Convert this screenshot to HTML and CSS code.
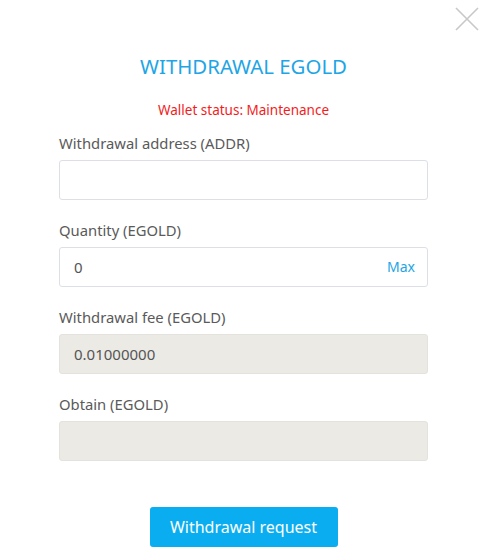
FILE: index.html
```html
<!DOCTYPE html>
<html lang="en">
<head>
    <meta charset="UTF-8">
    <title>Withdrawal EGOLD</title>
    <link rel="stylesheet" href="styles.css">
</head>
<body>
    <div class="modal">
        <button class="close-btn" aria-label="Close">
            <svg width="24" height="24" viewBox="0 0 24 24">
                <path d="M1 1 L23 23 M23 1 L1 23" stroke="#c8c8c8" stroke-width="1.6" fill="none"/>
            </svg>
        </button>

        <h2 class="modal-title">WITHDRAWAL EGOLD</h2>
        <p class="wallet-status">Wallet status: Maintenance</p>

        <form class="withdraw-form">
            <div class="field">
                <label>Withdrawal address (ADDR)</label>
                <input type="text" class="input">
            </div>
            <div class="field">
                <label>Quantity (EGOLD)</label>
                <div class="input input-with-max">
                    <span class="value">0</span>
                    <span class="max-link">Max</span>
                </div>
            </div>
            <div class="field">
                <label>Withdrawal fee (EGOLD)</label>
                <div class="input input-disabled">0.01000000</div>
            </div>
            <div class="field">
                <label>Obtain (EGOLD)</label>
                <div class="input input-disabled"></div>
            </div>
            <div class="actions">
                <button type="button" class="submit-btn">Withdrawal request</button>
            </div>
        </form>
    </div>
</body>
</html>
```

FILE: styles.css
```css
/* base */
body {
    margin: 0;
    padding: 0;
    background: #fff;
    font-family: "Noto Sans", "Open Sans", sans-serif;
    color: #555;
}

.modal {
    position: relative;
    width: 486px;
    height: 557px;
    box-sizing: border-box;
    padding: 48px 58px 0 59px;
}

.close-btn {
    position: absolute;
    top: 7px;
    right: 7px;
    width: 24px;
    height: 24px;
    padding: 0;
    border: none;
    background: none;
    cursor: pointer;
}

.close-btn svg {
    display: block;
}

/* header */
.modal-title {
    margin: 0;
    font-size: 20.4px;
    font-weight: normal;
    line-height: 36px;
    text-align: center;
    color: #1ea5e6;
}

.wallet-status {
    margin: 16px 0 0;
    font-size: 13.5px;
    line-height: 20px;
    text-align: center;
    color: #f21c1c;
}

/* form */
.withdraw-form {
    margin-top: 13px;
}

.field {
    margin-bottom: 20px;
}

.field label {
    display: block;
    font-size: 14.8px;
    line-height: 20px;
    margin-bottom: 7px;
    color: #5a5a5a;
}

.input {
    display: block;
    width: 100%;
    height: 40px;
    box-sizing: border-box;
    border: 1px solid #dcdfe6;
    border-radius: 3px;
    padding: 0 14px;
    font-family: inherit;
    font-size: 15px;
    line-height: 38px;
    color: #555;
    background: #fff;
}

.input-with-max {
    display: flex;
    justify-content: space-between;
    align-items: center;
    padding-right: 12px;
}

.max-link {
    color: #1ea5e6;
    font-size: 14px;
}

.input-disabled {
    background: #ebeae5;
    border-color: #e3e2dd;
}

.actions {
    display: flex;
    justify-content: center;
    margin-top: 46px;
}

.submit-btn {
    width: 188px;
    height: 40px;
    border: none;
    border-radius: 3px;
    background: #0aaef0;
    color: #fff;
    font-family: inherit;
    font-size: 16px;
    cursor: pointer;
}
```
